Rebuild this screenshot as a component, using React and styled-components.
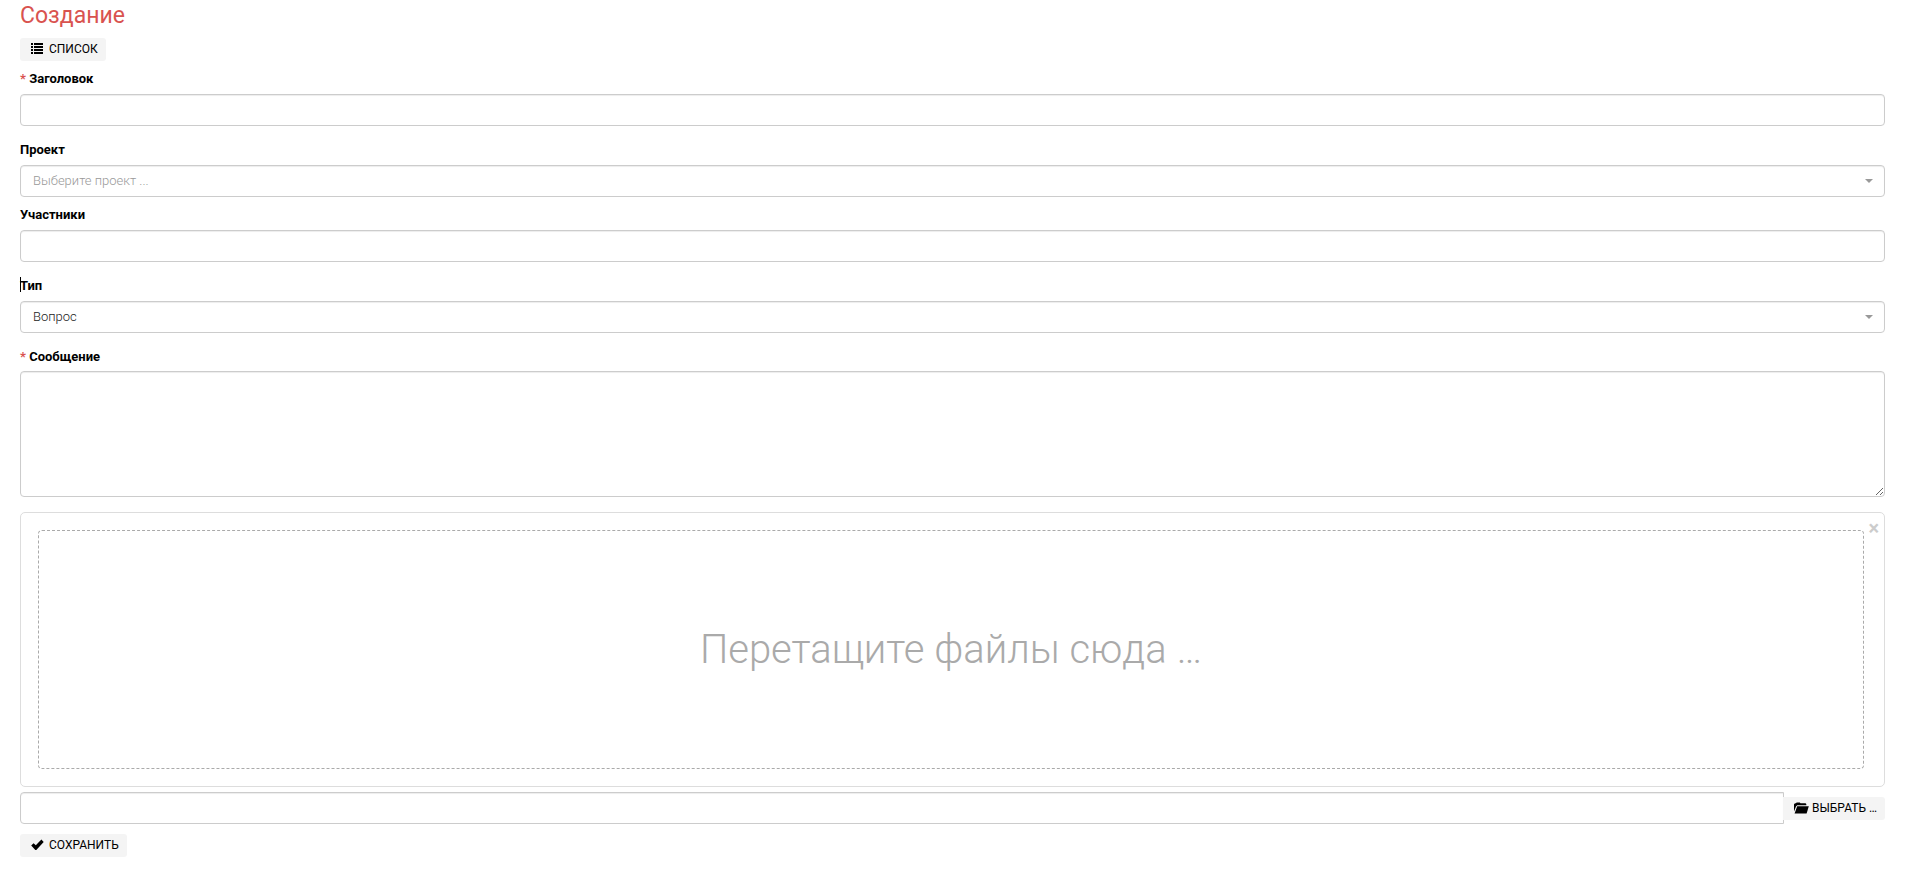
import { useRef, useState } from 'react'
import styled, { createGlobalStyle, css } from 'styled-components'

const GlobalStyle = createGlobalStyle`
  body {
    margin: 0;
    background: #fff;
    color: #000;
    font-family: Roboto, sans-serif;
    font-size: 13px;
    line-height: 18px;
  }
  *, *::before, *::after {
    box-sizing: border-box;
  }
`

const Page = styled.main`
  padding: 0 20px;
`

const Title = styled.h1`
  margin: 0 0 6px;
  color: #d9534f;
  font-size: 23px;
  font-weight: 400;
  line-height: 32px;
`

const Button = styled.button`
  display: inline-flex;
  align-items: center;
  flex-shrink: 0;
  gap: 5px;
  height: 23px;
  padding: 0 8px 1px 11px;
  border: none;
  border-radius: 3px;
  background: #f4f4f4;
  color: #000;
  font-family: inherit;
  font-size: 12px;
  line-height: 18px;
  text-transform: uppercase;
  white-space: nowrap;
  cursor: pointer;
  &:hover {
    background: #e6e6e6;
  }
  ${props => props.$attached && css`
    gap: 3px;
    margin-left: -1px;
    border-radius: 0 3px 3px 0;
  `}
`

const Toolbar = styled.div`
  display: flex;
`

const Form = styled.form`
  display: flex;
  flex-direction: column;
  align-items: stretch;
  margin-top: 9px;
`

const Field = styled.div`
  display: flex;
  flex-direction: column;
  gap: ${props => props.$multiline ? '5px' : '6px'};
  margin-bottom: ${props => props.$tight ? '9px' : '15px'};
`

const Label = styled.label`
  position: relative;
  align-self: flex-start;
  font-weight: 700;
  ${props => props.$required && css`
    &::before {
      content: '* ';
      color: #d9534f;
    }
  `}
  ${props => props.$caret && css`
    &::after {
      content: '';
      position: absolute;
      top: 0;
      left: 0;
      width: 1px;
      height: 15px;
      background: #000;
    }
  `}
`

const control = css`
  display: block;
  width: 100%;
  height: 32px;
  margin: 0;
  padding: 6px 12px;
  border: 1px solid #ccc;
  border-radius: 4px;
  background: #fff;
  box-shadow: inset 0 1px 1px rgba(0, 0, 0, 0.075);
  color: #222;
  font-family: inherit;
  font-size: 13px;
  font-weight: 300;
  line-height: 18px;
  &:focus {
    border-color: #66afe9;
    outline: none;
  }
`

const Input = styled.input`
  ${control}
  ${props => props.$attached && css`
    flex: 1;
    min-width: 0;
    width: auto;
    border-radius: 4px 0 0 4px;
  `}
`

const TextArea = styled.textarea`
  ${control}
  height: 126px;
  resize: vertical;
`

const SelectBox = styled.div`
  position: relative;
  &::after {
    content: '';
    position: absolute;
    top: 14px;
    right: 12px;
    border: 4px solid transparent;
    border-top-color: #999;
    border-bottom: 0;
    pointer-events: none;
  }
`

const Select = styled.select`
  ${control}
  appearance: none;
  color: ${props => props.$empty ? '#999' : '#222'};
`

const DropPanel = styled.div`
  position: relative;
  margin-bottom: 5px;
  padding: 17px 20px 17px 17px;
  border: 1px solid #ddd;
  border-radius: 5px;
`

const DropZone = styled.div`
  display: flex;
  align-items: center;
  justify-content: center;
  height: 239px;
  border: 1px dashed #aaa;
  border-radius: 4px;
  color: #aaa;
  font-size: 40px;
  font-weight: 300;
  line-height: 50px;
`

const CloseButton = styled.button`
  position: absolute;
  top: 5px;
  right: 5px;
  padding: 0;
  border: none;
  background: none;
  color: #ccc;
  font-family: inherit;
  font-size: 20px;
  font-weight: 700;
  line-height: 20px;
  cursor: pointer;
`

const FileRow = styled.div`
  display: flex;
  align-items: center;
  margin-bottom: 10px;
`

const ListIcon = () => (
    <svg width="13" height="12" viewBox="0 0 13 12" aria-hidden="true" shapeRendering="crispEdges">
        <path d="M0 0h2v2H0zM3 0h9v2H3zM0 3h2v2H0zM3 3h9v2H3zM0 6h2v2H0zM3 6h9v2H3zM0 9h2v2H0zM3 9h9v2H3z" />
    </svg>
)

const CheckIcon = () => (
    <svg width="13" height="12" viewBox="0 0 13 12" aria-hidden="true">
        <path d="M.2 6.6 2.6 4.2l2.2 2.1L10.4.6l2.3 2.3-7.4 8.1h-1z" />
    </svg>
)

const FolderIcon = () => (
    <svg width="15" height="12" viewBox="0 0 15 12" aria-hidden="true">
        <path d="M0 9.5V2.2L1 1.2h1L2.6.5h3.2l.7.7h5l.8.8v1.2H3.2L2 4.4z" />
        <path d="M3.2 4.2h11.6l-2.2 7.3H.6z" />
    </svg>
)

const App = () => {
    const [project, setProject] = useState('')
    const [fileNames, setFileNames] = useState('')
    const fileInput = useRef(null)

    const handleFiles = (files) => {
        setFileNames(Array.from(files).map(file => file.name).join(', '))
    }

    const handleDrop = (event) => {
        event.preventDefault()
        handleFiles(event.dataTransfer.files)
    }

    return (
        <>
            <GlobalStyle />
            <Page>
                <Title>Создание</Title>
                <Toolbar>
                    <Button type="button">
                        <ListIcon />
                        Список
                    </Button>
                </Toolbar>
                <Form onSubmit={(event) => event.preventDefault()}>
                    <Field>
                        <Label htmlFor="title" $required>Заголовок</Label>
                        <Input id="title" type="text" required />
                    </Field>
                    <Field $tight>
                        <Label htmlFor="project">Проект</Label>
                        <SelectBox>
                            <Select
                                id="project"
                                value={project}
                                $empty={!project}
                                onChange={(event) => setProject(event.target.value)}
                            >
                                <option value="">Выберите проект ...</option>
                            </Select>
                        </SelectBox>
                    </Field>
                    <Field>
                        <Label htmlFor="members">Участники</Label>
                        <Input id="members" type="text" />
                    </Field>
                    <Field>
                        <Label htmlFor="type" $caret>Тип</Label>
                        <SelectBox>
                            <Select id="type" defaultValue="question">
                                <option value="question">Вопрос</option>
                            </Select>
                        </SelectBox>
                    </Field>
                    <Field $multiline>
                        <Label htmlFor="message" $required>Сообщение</Label>
                        <TextArea id="message" required />
                    </Field>
                    <DropPanel>
                        <CloseButton type="button" aria-label="Закрыть" onClick={() => setFileNames('')}>×</CloseButton>
                        <DropZone onDragOver={(event) => event.preventDefault()} onDrop={handleDrop}>
                            Перетащите файлы сюда …
                        </DropZone>
                    </DropPanel>
                    <FileRow>
                        <Input type="text" aria-label="Файлы" value={fileNames} readOnly $attached />
                        <Button type="button" $attached onClick={() => fileInput.current.click()}>
                            <FolderIcon />
                            Выбрать …
                        </Button>
                        <input
                            ref={fileInput}
                            type="file"
                            multiple
                            hidden
                            onChange={(event) => handleFiles(event.target.files)}
                        />
                    </FileRow>
                    <Toolbar>
                        <Button type="submit">
                            <CheckIcon />
                            Сохранить
                        </Button>
                    </Toolbar>
                </Form>
            </Page>
        </>
    )
}

export default App
